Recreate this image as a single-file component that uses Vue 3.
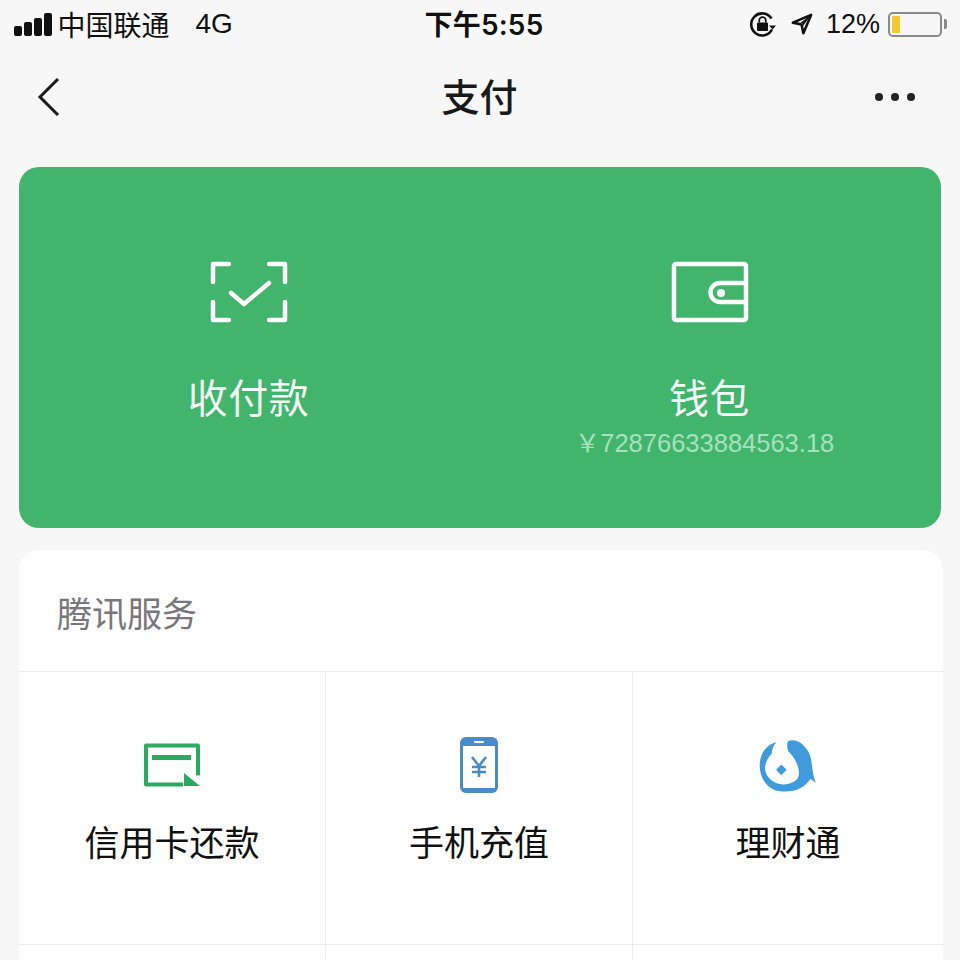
<template>
  <div class="page">
    <div class="status-bar">
      <div class="status-left">
        <div class="signal">
          <span v-for="h in signalBars" :key="h" class="bar" :style="{ height: h + 'px' }"></span>
        </div>
        <span class="carrier">中国联通</span>
        <span class="network">4G</span>
      </div>
      <div class="clock">下午5:55</div>
      <div class="status-right">
        <svg class="lock-icon" width="28" height="26" viewBox="0 0 28 26">
          <path d="M22.5 7.500A11 11 0 1 0 23 18.500" fill="none" stroke="#111" stroke-width="2.6" />
          <path d="M20 14.500h7l-3.500 4z" fill="#111" />
          <rect x="8" y="11.500" width="11" height="8.500" rx="1" fill="#111" />
          <path d="M10.200 11.500V9.400a3.300 3.300 0 0 1 6.600 0v2.100" fill="none" stroke="#111" stroke-width="1.700" />
        </svg>
        <svg class="arrow-icon" width="22" height="22" viewBox="0 0 24 24">
          <path d="M22 2 2 10.500l9.500 2L13.500 22z" fill="none" stroke="#111" stroke-width="2.800" stroke-linejoin="round" />
          <path d="M22 2 10 11l2.500.5.500 3z" fill="#111" />
        </svg>
        <span class="percent">12%</span>
        <div class="battery">
          <div class="battery-body"><span class="battery-level"></span></div>
          <span class="battery-tip"></span>
        </div>
      </div>
    </div>

    <div class="nav-bar">
      <svg class="back" width="26" height="40" viewBox="0 0 26 40">
        <path d="M21 2 3 20l18 18" fill="none" stroke="#1a1a1a" stroke-width="3" />
      </svg>
      <div class="nav-title">支付</div>
      <div class="more">
        <span></span><span></span><span></span>
      </div>
    </div>

    <div class="pay-card">
      <div class="pay-item">
        <svg class="pay-icon" width="78" height="62" viewBox="0 0 78 62">
          <g fill="none" stroke="#fff" stroke-width="4.500" stroke-linecap="round" stroke-linejoin="round">
            <path d="M19 3H3v18M59 3h16v18M19 59H3V41M59 59h16V41" />
            <path d="M21 32l13 11 25-21" />
          </g>
        </svg>
        <div class="pay-label">收付款</div>
      </div>
      <div class="pay-item">
        <svg class="pay-icon" width="78" height="62" viewBox="0 0 78 62">
          <g fill="none" stroke="#fff" stroke-width="4.500" stroke-linejoin="round">
            <rect x="3" y="3" width="72" height="56" rx="2" />
            <path d="M75 22H49a9.500 9.500 0 0 0 0 19h26" />
          </g>
          <circle cx="50" cy="32" r="4" fill="#fff" />
        </svg>
        <div class="pay-label">钱包</div>
        <div class="balance">{{ balance }}</div>
      </div>
    </div>

    <div class="service-card">
      <div class="service-title">腾讯服务</div>
      <div class="service-grid">
        <div class="service-item">
          <div class="service-icon">
            <svg width="58" height="44" viewBox="0 0 58 44">
              <path d="M40 41.500H3V2.500h52v30" fill="none" stroke="#2bab62" stroke-width="4" stroke-linejoin="round" />
              <rect x="9" y="12" width="39" height="5" fill="#2bab62" />
              <path d="M41 30l16 13H41z" fill="#2bab62" />
            </svg>
          </div>
          <div class="service-name">信用卡还款</div>
        </div>
        <div class="service-item">
          <div class="service-icon">
            <svg width="38" height="56" viewBox="0 0 38 56">
              <rect width="38" height="56" rx="6" fill="#4a8bc9" />
              <rect x="3" y="9" width="32" height="42" fill="#fff" />
              <rect x="14" y="4" width="10" height="2" rx="1" fill="#fff" />
              <path d="M12 20l7 9 7-9M12 30h14M12 35h14M19 29v11" fill="none" stroke="#4a8bc9" stroke-width="2.600" />
            </svg>
          </div>
          <div class="service-name">手机充值</div>
        </div>
        <div class="service-item">
          <div class="service-icon">
            <svg width="60" height="57" viewBox="55 50 180 170">
              <path d="M145 62C170 52 200 72 213 110C218 135 218 160 228 187L212 175C195 205 160 217 120 212C85 207 60 175 60 135C60 115 66 100 75 88C85 75 97 68 110 65C100 75 97 88 96 100C84 112 76 128 76 145C78 172 105 192 130 192C155 192 178 180 178 160C178 130 160 105 146 92C142 80 141 72 145 62Z" fill="#3f9bdc" />
              <path d="M125 135l13 13-13 13-13-13z" fill="#3f9bdc" stroke="#3f9bdc" stroke-width="4" stroke-linejoin="round" />
            </svg>
          </div>
          <div class="service-name">理财通</div>
        </div>
        <div class="service-item"></div>
        <div class="service-item"></div>
        <div class="service-item"></div>
      </div>
    </div>
  </div>
</template>

<script setup>
const signalBars = [10, 14, 18, 23]
const balance = '\uFFE572876633884563.18'
</script>

<style>
html, body {
  margin: 0;
  background: #f7f7f7;
}
</style>

<style scoped>
.page {
  width: 960px;
  height: 960px;
  overflow: hidden;
  background: #f7f7f7;
  color: #111;
  font-family: "Liberation Sans", "Noto Sans CJK SC", sans-serif;
}
.status-bar {
  height: 48px;
  display: grid;
  grid-template-columns: 1fr auto 1fr;
  align-items: center;
  padding: 0 13px 0 14px;
}
.status-left, .status-right {
  display: flex;
  align-items: center;
}
.status-right {
  justify-content: flex-end;
}
.signal {
  display: flex;
  align-items: flex-end;
  gap: 2.500px;
  height: 23px;
}
.bar {
  width: 7.500px;
  background: #111;
  border-radius: 2px;
}
.carrier {
  font-size: 28px;
  margin-left: 6px;
}
.network {
  font-size: 28px;
  margin-left: 26px;
}
.clock {
  font-family: Inter, "Noto Sans CJK SC", sans-serif;
  font-size: 28px;
  font-weight: 600;
  margin: 0 0 3px 7px;
  letter-spacing: 0.200px;
}
.arrow-icon {
  margin-left: 14px;
}
.percent {
  font-size: 27px;
  margin-left: 13px;
}
.battery {
  display: flex;
  align-items: center;
  margin-left: 8px;
}
.battery-body {
  width: 54px;
  height: 25px;
  box-sizing: border-box;
  border: 2px solid #8a8a8a;
  border-radius: 5px;
  padding: 2px;
  display: flex;
}
.battery-level {
  width: 8px;
  background: #f5c82e;
  border-radius: 1px;
}
.battery-tip {
  width: 3px;
  height: 10px;
  margin-left: 2px;
  background: #8a8a8a;
  border-radius: 0 2px 2px 0;
}
.nav-bar {
  height: 94px;
  display: grid;
  grid-template-columns: 1fr auto 1fr;
  align-items: center;
  padding: 0 45px 0 37px;
}
.back {
  margin-top: 4px;
}
.nav-title {
  font-size: 38px;
  font-weight: 500;
  color: #1a1a1a;
  margin: 0 0 2px 7px;
}
.more {
  display: flex;
  justify-content: flex-end;
  gap: 8px;
  margin-top: 4px;
}
.more span {
  width: 8px;
  height: 8px;
  border-radius: 50%;
  background: #222;
}
.pay-card {
  margin: 25px 19px 0 19px;
  height: 361px;
  border-radius: 20px;
  background: #40b56b;
  display: grid;
  grid-template-columns: 459px 1fr;
  color: #fff;
}
.pay-item {
  display: flex;
  flex-direction: column;
  align-items: center;
  padding-top: 94px;
}
.pay-icon {
  display: block;
}
.pay-label {
  font-size: 40px;
  letter-spacing: 0.500px;
  line-height: 48px;
  margin-top: 52px;
  color: #f2fbf5;
}
.balance {
  font-size: 25.500px;
  line-height: 30px;
  margin: 5px 10px 0 0;
  color: #a9e0bd;
}
.service-card {
  margin: 22px 17px 0 19px;
  background: #fff;
  border-radius: 20px 20px 0 0;
}
.service-title {
  height: 122px;
  box-sizing: border-box;
  display: flex;
  align-items: center;
  padding: 2px 0 0 38px;
  font-size: 35px;
  color: #77777c;
  border-bottom: 1px solid #ececec;
}
.service-grid {
  display: grid;
  grid-template-columns: 307px 307px 310px;
}
.service-item {
  height: 273px;
  box-sizing: border-box;
  border-right: 1px solid #ececec;
  border-bottom: 1px solid #ececec;
  display: flex;
  flex-direction: column;
  align-items: center;
  padding-top: 64px;
}
.service-item:nth-child(3n) {
  border-right: none;
}
.service-icon {
  height: 58px;
  display: flex;
  align-items: center;
  justify-content: center;
}
.service-name {
  font-size: 35px;
  line-height: 42px;
  margin-top: 29px;
  color: #111;
}
</style>
